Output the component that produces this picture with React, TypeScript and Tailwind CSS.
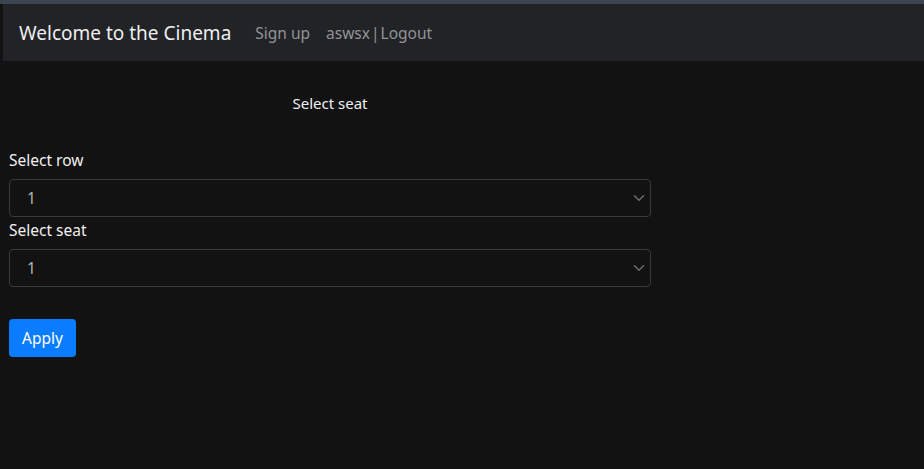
import React from 'react';

const Chevron: React.FC = () => (
  <svg width="12" height="12" viewBox="0 0 16 16" className="absolute right-[6px] top-1/2 -translate-y-1/2 pointer-events-none">
    <path d="M2 5l6 6 6-6" fill="none" stroke="#6c6c6c" strokeWidth="2" strokeLinecap="round" strokeLinejoin="round" />
  </svg>
);

const SeatSelect: React.FC<{ label: string }> = ({ label }) => (
  <div>
    <label className="block mb-[7px] text-[#f0f0f0] text-[15.5px] leading-[24px]">{label}</label>
    <div className="relative">
      <select className="w-full h-[38px] appearance-none bg-[#121212] border border-[#3a3a3c] rounded-[4px] pl-[17px] text-[#b5b5b5] text-[15.5px] outline-none">
        <option>1</option>
        <option>2</option>
        <option>3</option>
      </select>
      <Chevron />
    </div>
  </div>
);

export default function App() {
  return (
    <div className="min-h-screen bg-[#121212] text-[16px] leading-[24px]" style={{ fontFamily: '"Noto Sans", "Open Sans", sans-serif' }}>
      <div className="h-[4px] bg-[#3b4552]" />
      {/* Navbar */}
      <nav className="ml-[3px] h-[57px] bg-[#212327] flex items-center pl-[16px]">
        <span className="text-[19px] text-[#eeeeee] mr-[24px]">Welcome to the Cinema</span>
        <span className="text-[15.5px] text-[#929395] mr-[16px]">Sign up</span>
        <span className="text-[15.5px] text-[#929395]">aswsx<span className="mx-[1px]">|</span>Logout</span>
      </nav>

      <div className="w-[660px] pl-[9px] pr-[9px]">
        <div className="text-center text-[15px] text-[#f0f0f0] pt-[30px] pl-[0px]">Select seat</div>
        <div className="mt-[33px] flex flex-col gap-[1px]">
          <SeatSelect label="Select row" />
          <SeatSelect label="Select seat" />
        </div>
        <button className="mt-[32px] h-[38px] px-[13px] bg-[#0a7cff] text-white text-[15.5px] rounded-[4px]">Apply</button>
      </div>
    </div>
  );
}
